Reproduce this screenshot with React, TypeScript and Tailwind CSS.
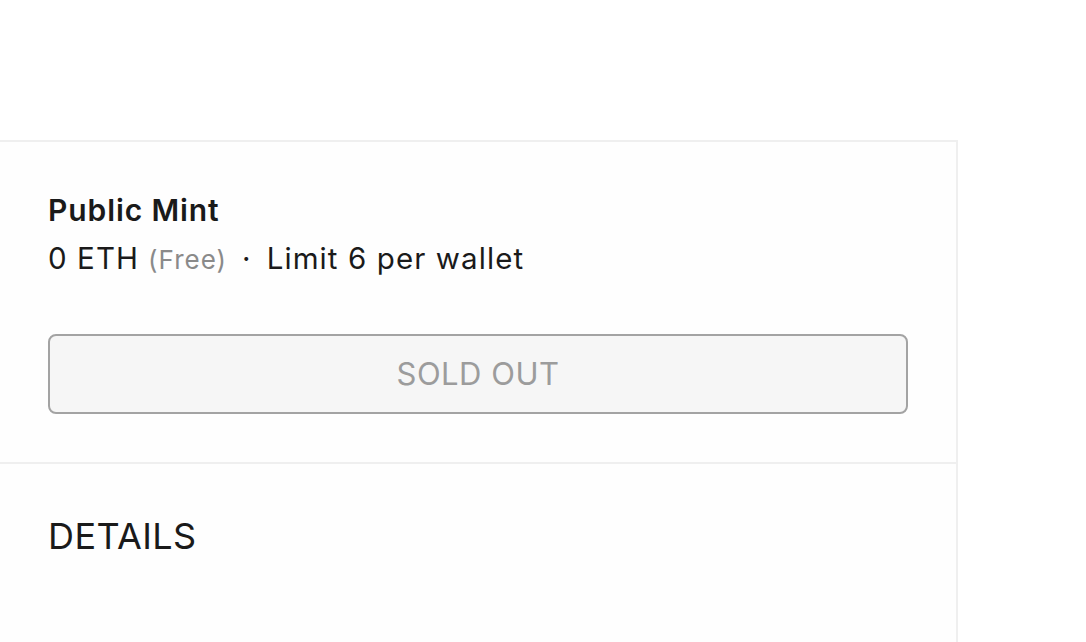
export default function App() {
  return (
    <div className="flex min-h-[642px] w-[1086px] flex-col bg-white pt-[140px] font-['Inter',sans-serif] text-[#1a1a1a]">
      <div className="w-[958px] flex-1 border-t-2 border-r-2 border-[#efefef] bg-[#fefefe]">
        {/* Mint section */}
        <div className="px-12 pt-[50px] pb-[48px]">
          <div className="text-[30px] leading-[36px] font-semibold tracking-[0.9px]">Public Mint</div>
          <div className="mt-[12px] flex items-baseline text-[29.5px] leading-[36px] tracking-[1.1px]">
            <span>0 ETH</span>
            <span className="ml-[9px] text-[26px] tracking-[1px] text-[#8a8a8a]">(Free)</span>
            <span className="mx-[15px]">·</span>
            <span>Limit 6 per wallet</span>
          </div>
          <button
            disabled
            className="mt-[56px] flex h-[80px] w-[860px] items-center justify-center rounded-lg border-2 border-[#a3a3a3] bg-[#f6f6f6] text-[31px] tracking-[0.5px] text-[#9c9c9c]"
          >
            SOLD OUT
          </button>
        </div>
        {/* Details */}
        <div className="border-t-2 border-[#efefef] px-12 pt-[50px] pb-[60px]">
          <div className="text-[36px] leading-[44px] tracking-[0.4px]">DETAILS</div>
        </div>
      </div>
    </div>
  );
}
